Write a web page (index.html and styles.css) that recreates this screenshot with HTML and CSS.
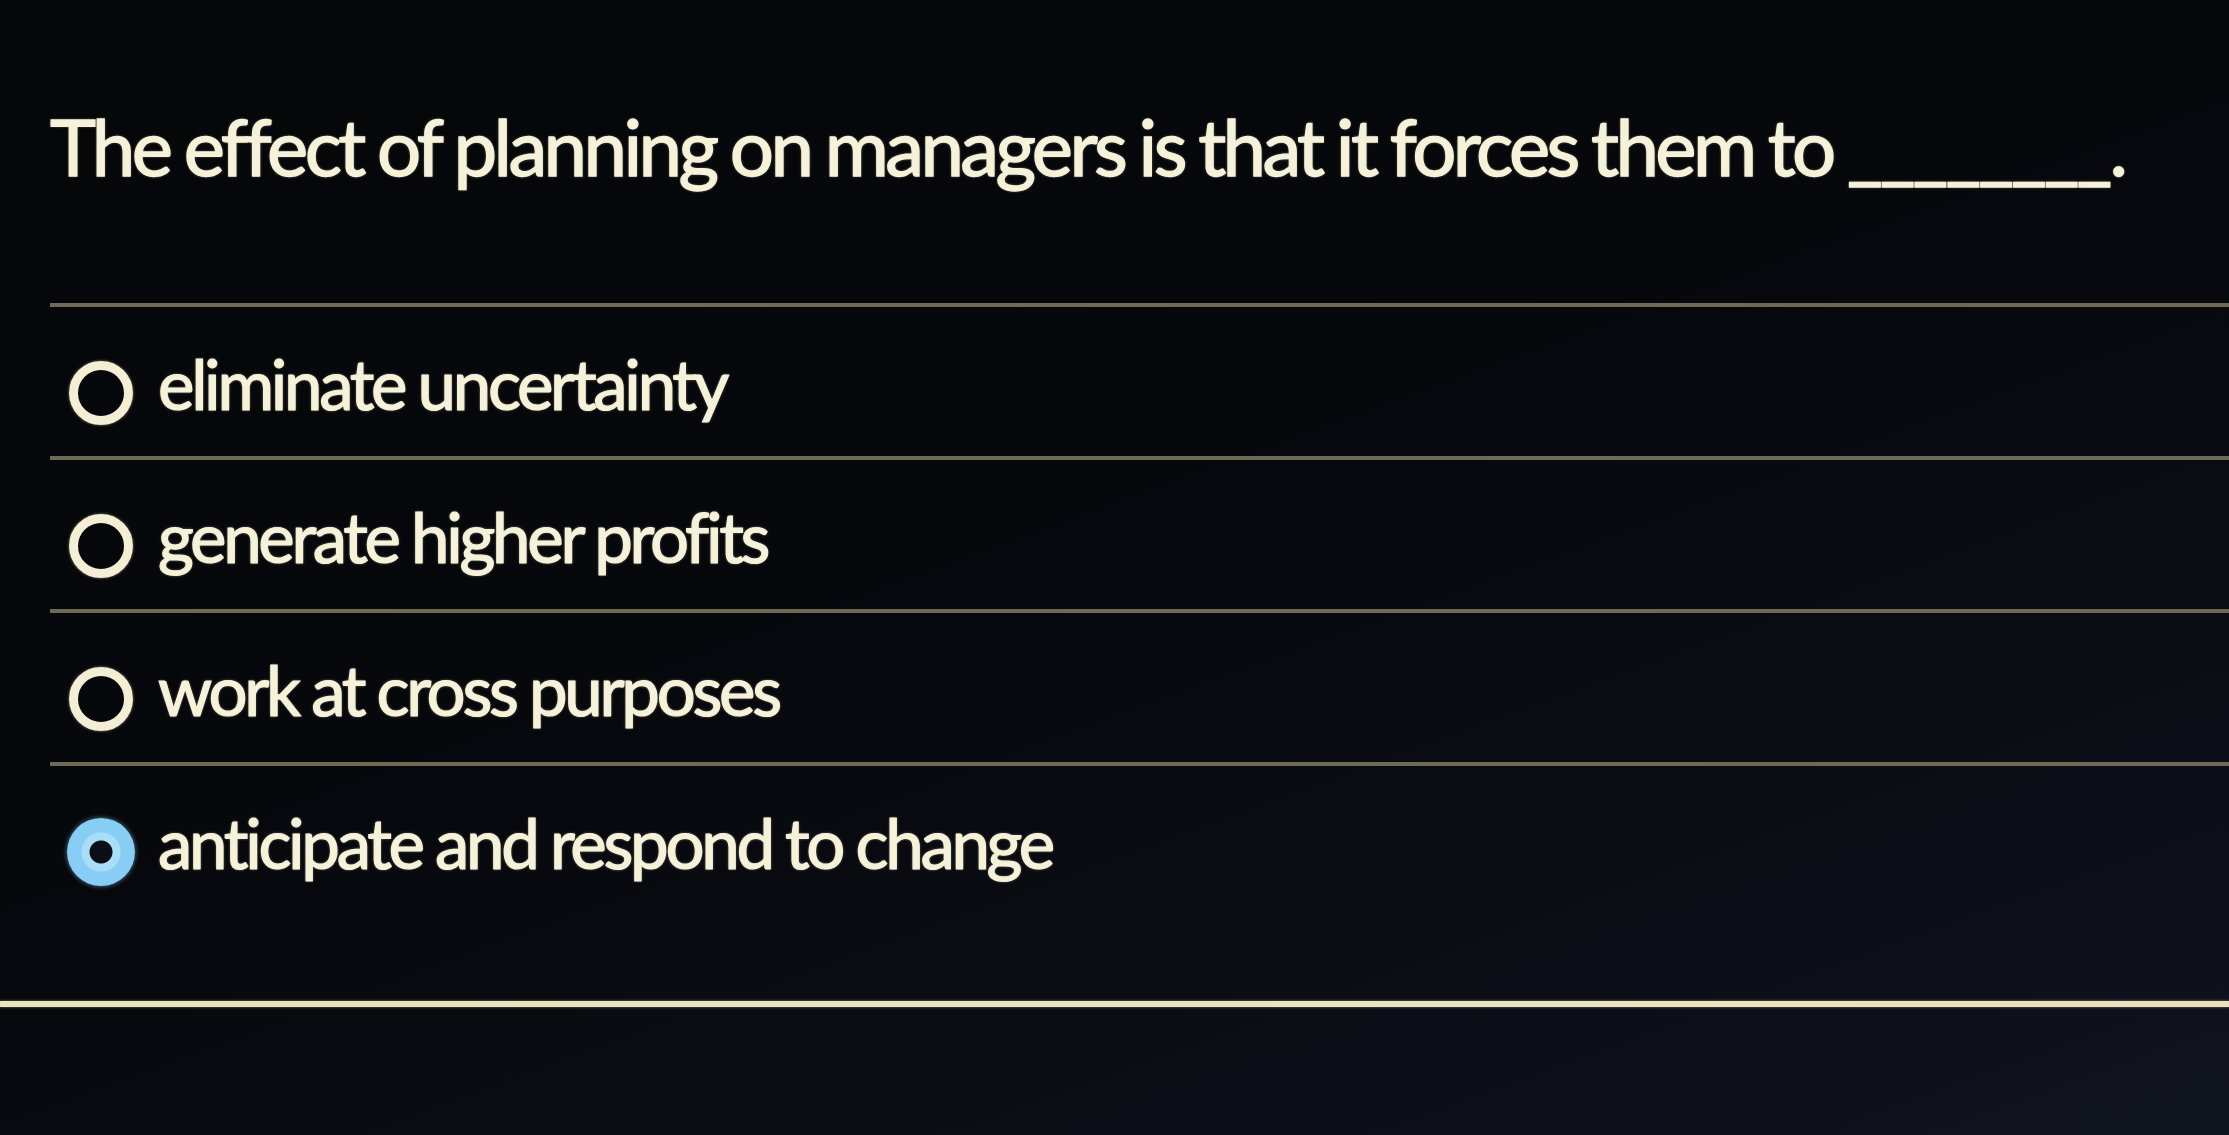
FILE: index.html
```html
<!DOCTYPE html>
<html lang="en">
<head>
<meta charset="utf-8">
<title>Quiz question</title>
<link rel="stylesheet" href="styles.css">
</head>
<body>
<main class="page">
  <section class="quiz">
    <h1 class="question">The effect of planning on managers is that it forces them to <span class="blank">________</span>.</h1>
    <ul class="options">
      <li class="option"><span class="radio"></span><span class="label">eliminate uncertainty</span></li>
      <li class="option"><span class="radio"></span><span class="label">generate higher profits</span></li>
      <li class="option"><span class="radio"></span><span class="label">work at cross purposes</span></li>
      <li class="option option-selected"><span class="radio radio-checked"></span><span class="label">anticipate and respond to change</span></li>
    </ul>
  </section>
  <hr class="divider">
</main>
</body>
</html>
```

FILE: styles.css
```css
html, body {
  margin: 0;
  padding: 0;
}

body {
  width: 2229px;
  height: 1135px;
  overflow: hidden;
  background: linear-gradient(160deg, #060709 0%, #07080c 45%, #0b0e16 80%, #10141f 100%);
  color: #f6f2da;
  font-family: "Lato", "Open Sans", "Liberation Sans", sans-serif;
}

.page {
  display: flex;
  flex-direction: column;
}

.quiz {
  padding-left: 50px;
}

.question {
  margin: 99px 0 0 0;
  font-size: 78px;
  font-weight: 400;
  line-height: 94px;
  letter-spacing: -3.6px;
  word-spacing: -2px;
  white-space: nowrap;
  -webkit-text-stroke: 1.3px #f6f2da;
  text-shadow: 0 0 3px rgba(255, 248, 215, 0.55);
}

.blank {
  letter-spacing: -3px;
}

.options {
  list-style: none;
  margin: 110px 0 0 0;
  padding: 0;
}

.option {
  box-sizing: border-box;
  height: 153px;
  padding-top: 22px;
  border-top: 4px solid #6d6a56;
  display: flex;
  align-items: center;
  gap: 25px;
  padding-left: 19px;
}

.label {
  font-size: 69px;
  line-height: 1;
  padding-bottom: 18px;
  letter-spacing: -3.3px;
  word-spacing: -1px;
  white-space: nowrap;
  -webkit-text-stroke: 1.2px #f6f2da;
  text-shadow: 0 0 3px rgba(255, 248, 215, 0.55);
}

.radio {
  box-sizing: border-box;
  width: 64px;
  height: 64px;
  flex: none;
  border-radius: 50%;
  border: 9px solid #f4efd4;
  box-shadow: 0 0 3px rgba(255, 245, 210, 0.5);
}

.radio-checked {
  width: 68px;
  height: 68px;
  margin-left: -2px;
  margin-right: -2px;
  border: none;
  background: radial-gradient(circle at center, #0b0f15 0 11px, #a9def8 12px 19px, #88cef4 20px 34px);
  box-shadow: 0 0 5px rgba(130, 200, 245, 0.6);
}

.divider {
  margin: 86px 0 0 0;
  border: none;
  height: 6px;
  background: #e9e4bd;
  box-shadow: 0 0 3px rgba(240, 235, 190, 0.5);
}
```
